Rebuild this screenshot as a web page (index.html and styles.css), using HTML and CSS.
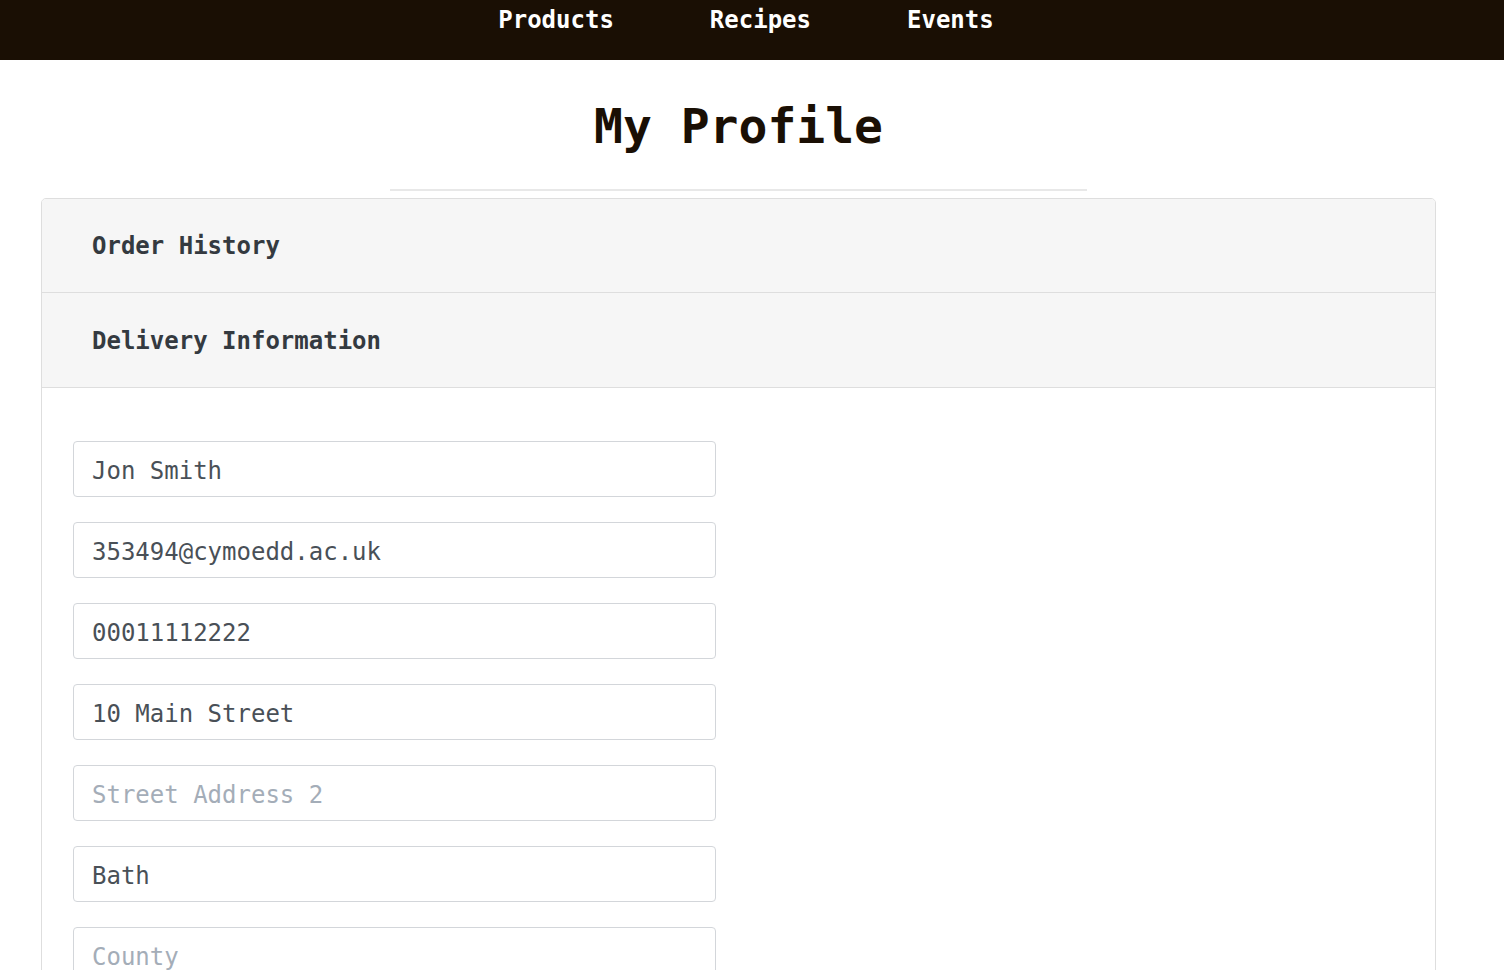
FILE: index.html
```html
<!DOCTYPE html>
<html lang="en">
<head>
<meta charset="utf-8">
<title>My Profile</title>
<link rel="stylesheet" href="styles.css">
</head>
<body>
<nav class="topnav">
  <a class="nav-link" href="#">Products</a>
  <a class="nav-link" href="#">Recipes</a>
  <a class="nav-link" href="#">Events</a>
</nav>
<main class="page">
  <h1 class="page-title">My Profile</h1>
  <div class="divider"></div>
  <section class="accordion">
    <div class="acc-header acc-first">Order History</div>
    <div class="acc-header">Delivery Information</div>
    <div class="acc-body">
      <form class="delivery-form">
        <input class="field" type="text" value="Jon Smith">
        <input class="field" type="text" value="353494@cymoedd.ac.uk">
        <input class="field" type="text" value="00011112222">
        <input class="field" type="text" value="10 Main Street">
        <input class="field" type="text" placeholder="Street Address 2">
        <input class="field" type="text" value="Bath">
        <input class="field" type="text" placeholder="County">
      </form>
    </div>
  </section>
</main>
</body>
</html>
```
FILE: styles.css
```css
html, body {
  margin: 0;
  padding: 0;
  background: #ffffff;
}
body {
  font-family: "DejaVu Sans Mono", "Liberation Mono", monospace;
  overflow: hidden;
  height: 970px;
}
.topnav {
  height: 60px;
  background: #1a0f04;
  display: flex;
  justify-content: center;
  box-sizing: border-box;
  padding: 6px 12px 0 0;
  gap: 96px;
}
.nav-link {
  color: #ffffff;
  text-decoration: none;
  font-weight: bold;
  font-size: 24px;
  line-height: 28px;
  height: 28px;
}
.page {
  padding: 0 68px 0 41px;
}
.page-title {
  margin: 38px 0 0;
  text-align: center;
  font-size: 48px;
  font-weight: bold;
  line-height: 56px;
  color: #1a0f04;
}
.divider {
  width: 50%;
  margin: 35px auto 7px;
  border-top: 2px solid #e8e8e8;
}
.accordion {
  border: 1px solid #dedede;
  border-radius: 5px;
  overflow: hidden;
}
.acc-header {
  height: 95px;
  box-sizing: border-box;
  border-bottom: 1px solid #dedede;
  background: #f6f6f6;
  display: flex;
  align-items: center;
  padding: 2px 50px 0;
  font-size: 24px;
  font-weight: bold;
  color: #343a40;
}
.acc-first {
  height: 94px;
  padding-top: 0;
}
.acc-body {
  padding: 53px 31px 40px;
  background: #ffffff;
}
.delivery-form {
  display: flex;
  flex-direction: column;
  gap: 25px;
}
.field {
  box-sizing: border-box;
  width: 643px;
  height: 56px;
  border: 1px solid #d3d6da;
  border-radius: 4px;
  padding: 3px 18px 0;
  font-family: "DejaVu Sans Mono", "Liberation Mono", monospace;
  font-size: 24px;
  color: #495057;
  background: #ffffff;
  outline: none;
}
.field::placeholder {
  color: #a4adb8;
}
```
